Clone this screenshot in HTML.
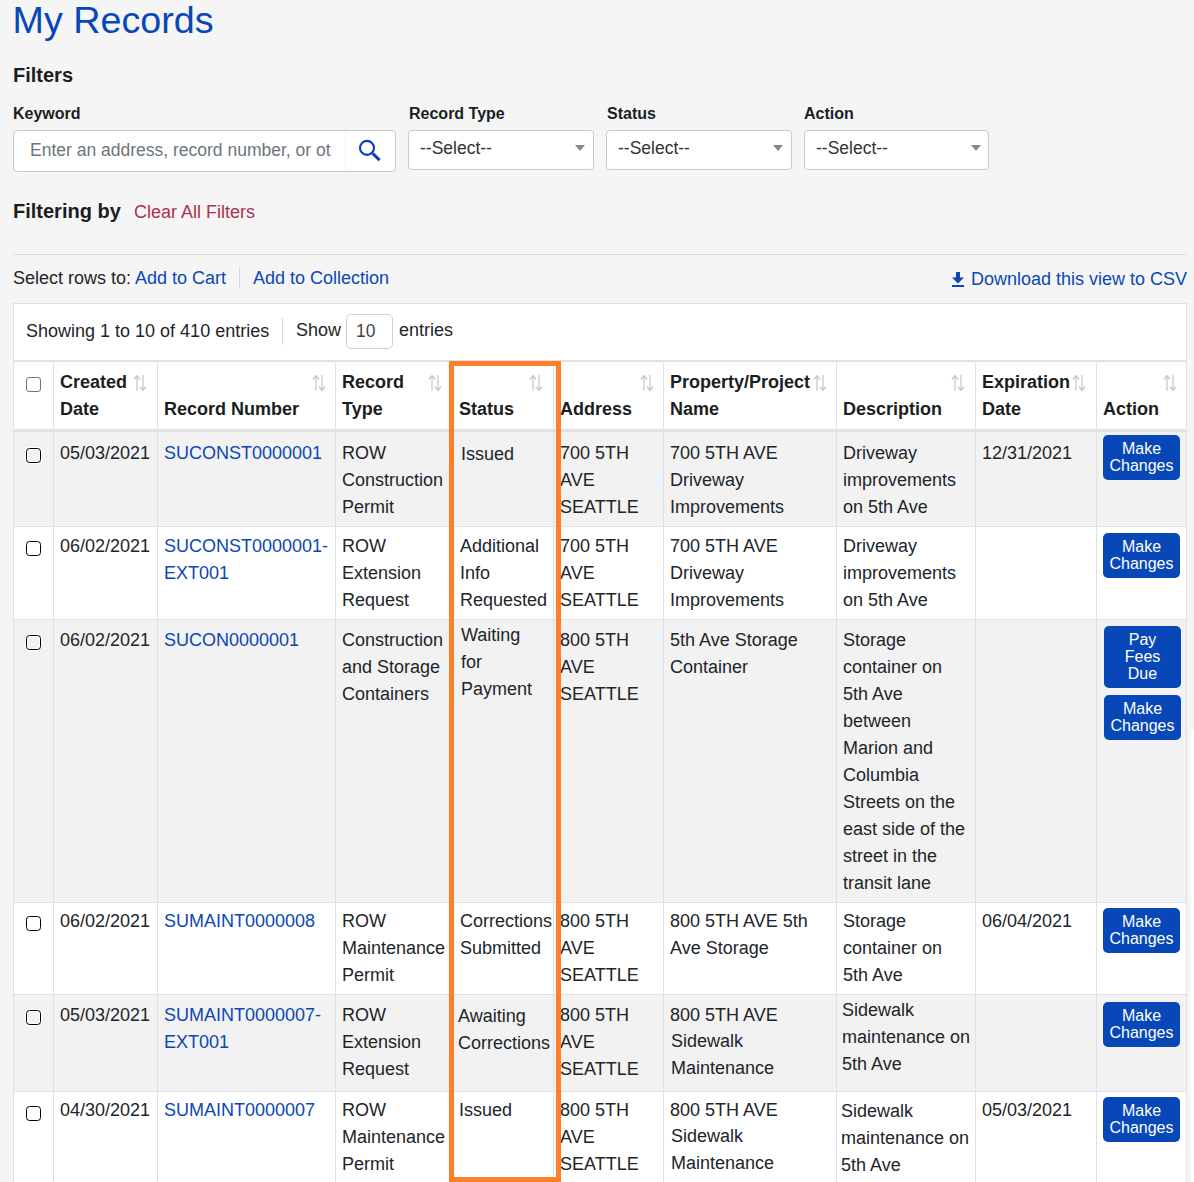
<!DOCTYPE html>
<html><head><meta charset="utf-8"><title>My Records</title>
<style>
html,body{margin:0;padding:0;}
body{width:1194px;height:1182px;overflow:hidden;background:#f5f5f5;position:relative;font-family:'Liberation Sans', sans-serif;}
.t{position:absolute;white-space:nowrap;}
.b{position:absolute;}
</style></head><body>
<div class="t" style="left:12.5px;top:0px;font-size:37.7px;line-height:40px;color:#0747b8;">My Records</div>
<div class="t" style="left:13px;top:65px;font-size:20px;line-height:20px;font-weight:bold;color:#1b1e21;">Filters</div>
<div class="t" style="left:13px;top:105px;font-size:16px;line-height:17px;font-weight:bold;color:#1b1e21;">Keyword</div>
<div class="t" style="left:409px;top:105px;font-size:16px;line-height:17px;font-weight:bold;color:#1b1e21;">Record Type</div>
<div class="t" style="left:607px;top:105px;font-size:16px;line-height:17px;font-weight:bold;color:#1b1e21;">Status</div>
<div class="t" style="left:804px;top:105px;font-size:16px;line-height:17px;font-weight:bold;color:#1b1e21;">Action</div>
<div class="b" style="left:13px;top:130px;width:383px;height:42px;box-sizing:border-box;border:1px solid #c9c9c9;border-radius:4px;background:#fff;"></div>
<div class="b" style="left:345px;top:131px;width:1px;height:40px;background:#f4f4f4;"></div>
<div class="t" style="left:30px;top:140px;font-size:17.5px;line-height:20px;color:#6c757d;">Enter an address, record number, or ot</div>
<svg class="b" style="left:356px;top:138px" width="26" height="26" viewBox="0 0 26 26"><circle cx="11" cy="9.9" r="7" fill="none" stroke="#0b3fb8" stroke-width="2.1"/><line x1="16.6" y1="15.4" x2="23.6" y2="22.1" stroke="#0b3fb8" stroke-width="2.9"/></svg>
<div class="b" style="left:408px;top:130px;width:186px;height:40px;box-sizing:border-box;border:1px solid #c9c9c9;border-radius:4px;background:#fff;"></div>
<div class="t" style="left:420px;top:138px;font-size:17.5px;line-height:20px;color:#333;">--Select--</div>
<svg class="b" style="left:575px;top:145px" width="10" height="6" viewBox="0 0 10 6"><path d="M0 0H10L5 6Z" fill="#878787"/></svg>
<div class="b" style="left:606px;top:130px;width:186px;height:40px;box-sizing:border-box;border:1px solid #c9c9c9;border-radius:4px;background:#fff;"></div>
<div class="t" style="left:618px;top:138px;font-size:17.5px;line-height:20px;color:#333;">--Select--</div>
<svg class="b" style="left:773px;top:145px" width="10" height="6" viewBox="0 0 10 6"><path d="M0 0H10L5 6Z" fill="#878787"/></svg>
<div class="b" style="left:804px;top:130px;width:185px;height:40px;box-sizing:border-box;border:1px solid #c9c9c9;border-radius:4px;background:#fff;"></div>
<div class="t" style="left:816px;top:138px;font-size:17.5px;line-height:20px;color:#333;">--Select--</div>
<svg class="b" style="left:971px;top:145px" width="10" height="6" viewBox="0 0 10 6"><path d="M0 0H10L5 6Z" fill="#878787"/></svg>
<div class="t" style="left:13px;top:201px;font-size:20px;line-height:20px;font-weight:bold;color:#1b1e21;">Filtering by</div>
<div class="t" style="left:134px;top:202px;font-size:18px;line-height:20px;color:#a8334f;">Clear All Filters</div>
<div class="b" style="left:13px;top:254px;width:1173px;height:1px;background:#dadee3;"></div>
<div class="t" style="left:13px;top:268px;font-size:18px;line-height:20px;color:#212529;">Select rows to:</div>
<div class="t" style="left:135px;top:268px;font-size:18px;line-height:20px;color:#0b47b5;">Add to Cart</div>
<div class="b" style="left:239px;top:268px;width:1px;height:20px;background:#d5d5d5;"></div>
<div class="t" style="left:253px;top:268px;font-size:18px;line-height:20px;color:#0b47b5;">Add to Collection</div>
<svg class="b" style="left:951px;top:271px" width="14" height="17" viewBox="0 0 14 17"><rect x="5" y="1" width="4" height="7" fill="#0b47b5"/><path d="M1 6.5H13L7 12.5Z" fill="#0b47b5"/><rect x="1" y="14" width="12" height="2" fill="#0b47b5"/></svg>
<div class="t" style="left:971px;top:269px;font-size:18px;line-height:20px;color:#0b47b5;">Download this view to CSV</div>
<div class="b" style="left:13px;top:303px;width:1174px;height:879px;box-sizing:border-box;border:1px solid #dee2e6;border-bottom:none;background:#fff;"></div>
<div class="t" style="left:26px;top:321px;font-size:18px;line-height:20px;color:#212529;">Showing 1 to 10 of 410 entries</div>
<div class="b" style="left:282px;top:318px;width:1px;height:27px;background:#d8d8d8;"></div>
<div class="t" style="left:296px;top:320px;font-size:18px;line-height:20px;color:#212529;">Show</div>
<div class="b" style="left:346px;top:314px;width:47px;height:35px;box-sizing:border-box;border:1px solid #cfcfcf;border-radius:5px;background:#fff;"></div>
<div class="t" style="left:356px;top:321px;font-size:17.5px;line-height:20px;color:#444;">10</div>
<div class="t" style="left:399px;top:320px;font-size:18px;line-height:20px;color:#212529;">entries</div>
<div class="b" style="left:14px;top:360px;width:1172px;height:2px;background:#dee2e6;"></div>
<div class="b" style="left:14px;top:432px;width:1172px;height:94px;background:#f2f2f2;"></div>
<div class="b" style="left:14px;top:527px;width:1172px;height:92px;background:#fff;"></div>
<div class="b" style="left:14px;top:620px;width:1172px;height:282px;background:#f2f2f2;"></div>
<div class="b" style="left:14px;top:903px;width:1172px;height:91px;background:#fff;"></div>
<div class="b" style="left:14px;top:995px;width:1172px;height:96px;background:#f2f2f2;"></div>
<div class="b" style="left:14px;top:1092px;width:1172px;height:90px;background:#fff;"></div>
<div class="b" style="left:14px;top:429px;width:1172px;height:3px;background:#dee2e6;"></div>
<div class="b" style="left:14px;top:526px;width:1172px;height:1px;background:#dee2e6;"></div>
<div class="b" style="left:14px;top:619px;width:1172px;height:1px;background:#dee2e6;"></div>
<div class="b" style="left:14px;top:902px;width:1172px;height:1px;background:#dee2e6;"></div>
<div class="b" style="left:14px;top:994px;width:1172px;height:1px;background:#dee2e6;"></div>
<div class="b" style="left:14px;top:1091px;width:1172px;height:1px;background:#dee2e6;"></div>
<div class="b" style="left:53px;top:362px;width:1px;height:820px;background:#dee2e6;"></div>
<div class="b" style="left:157px;top:362px;width:1px;height:820px;background:#dee2e6;"></div>
<div class="b" style="left:335px;top:362px;width:1px;height:820px;background:#dee2e6;"></div>
<div class="b" style="left:451px;top:362px;width:1px;height:820px;background:#dee2e6;"></div>
<div class="b" style="left:553px;top:362px;width:1px;height:820px;background:#dee2e6;"></div>
<div class="b" style="left:663px;top:362px;width:1px;height:820px;background:#dee2e6;"></div>
<div class="b" style="left:836px;top:362px;width:1px;height:820px;background:#dee2e6;"></div>
<div class="b" style="left:975px;top:362px;width:1px;height:820px;background:#dee2e6;"></div>
<div class="b" style="left:1096px;top:362px;width:1px;height:820px;background:#dee2e6;"></div>
<div class="t" style="left:60px;top:369px;font-size:18px;line-height:27px;font-weight:bold;color:#1b1e21;">Created</div>
<div class="t" style="left:60px;top:396px;font-size:18px;line-height:27px;font-weight:bold;color:#1b1e21;">Date</div>
<div class="t" style="left:164px;top:396px;font-size:18px;line-height:27px;font-weight:bold;color:#1b1e21;">Record Number</div>
<div class="t" style="left:342px;top:369px;font-size:18px;line-height:27px;font-weight:bold;color:#1b1e21;">Record</div>
<div class="t" style="left:342px;top:396px;font-size:18px;line-height:27px;font-weight:bold;color:#1b1e21;">Type</div>
<div class="t" style="left:459px;top:396px;font-size:18px;line-height:27px;font-weight:bold;color:#1b1e21;">Status</div>
<div class="t" style="left:560px;top:396px;font-size:18px;line-height:27px;font-weight:bold;color:#1b1e21;">Address</div>
<div class="t" style="left:670px;top:369px;font-size:18px;line-height:27px;font-weight:bold;color:#1b1e21;">Property/Project</div>
<div class="t" style="left:670px;top:396px;font-size:18px;line-height:27px;font-weight:bold;color:#1b1e21;">Name</div>
<div class="t" style="left:843px;top:396px;font-size:18px;line-height:27px;font-weight:bold;color:#1b1e21;">Description</div>
<div class="t" style="left:982px;top:369px;font-size:18px;line-height:27px;font-weight:bold;color:#1b1e21;">Expiration</div>
<div class="t" style="left:982px;top:396px;font-size:18px;line-height:27px;font-weight:bold;color:#1b1e21;">Date</div>
<div class="t" style="left:1103px;top:396px;font-size:18px;line-height:27px;font-weight:bold;color:#1b1e21;">Action</div>
<svg class="b" style="left:133px;top:374px" width="14" height="18" viewBox="0 0 14 18"><path d="M4 2.5V16.8" stroke="#dcdcdc" stroke-width="2"/><path d="M1 5.3L4 1.6L7 5.3" fill="none" stroke="#c2c2c2" stroke-width="1.3" stroke-linejoin="round"/><path d="M10 0.9V15.3" stroke="#dcdcdc" stroke-width="2"/><path d="M7 12.6L10 16.3L13 12.6" fill="none" stroke="#c2c2c2" stroke-width="1.3" stroke-linejoin="round"/></svg>
<svg class="b" style="left:312px;top:374px" width="14" height="18" viewBox="0 0 14 18"><path d="M4 2.5V16.8" stroke="#dcdcdc" stroke-width="2"/><path d="M1 5.3L4 1.6L7 5.3" fill="none" stroke="#c2c2c2" stroke-width="1.3" stroke-linejoin="round"/><path d="M10 0.9V15.3" stroke="#dcdcdc" stroke-width="2"/><path d="M7 12.6L10 16.3L13 12.6" fill="none" stroke="#c2c2c2" stroke-width="1.3" stroke-linejoin="round"/></svg>
<svg class="b" style="left:428px;top:374px" width="14" height="18" viewBox="0 0 14 18"><path d="M4 2.5V16.8" stroke="#dcdcdc" stroke-width="2"/><path d="M1 5.3L4 1.6L7 5.3" fill="none" stroke="#c2c2c2" stroke-width="1.3" stroke-linejoin="round"/><path d="M10 0.9V15.3" stroke="#dcdcdc" stroke-width="2"/><path d="M7 12.6L10 16.3L13 12.6" fill="none" stroke="#c2c2c2" stroke-width="1.3" stroke-linejoin="round"/></svg>
<svg class="b" style="left:529px;top:374px" width="14" height="18" viewBox="0 0 14 18"><path d="M4 2.5V16.8" stroke="#dcdcdc" stroke-width="2"/><path d="M1 5.3L4 1.6L7 5.3" fill="none" stroke="#c2c2c2" stroke-width="1.3" stroke-linejoin="round"/><path d="M10 0.9V15.3" stroke="#dcdcdc" stroke-width="2"/><path d="M7 12.6L10 16.3L13 12.6" fill="none" stroke="#c2c2c2" stroke-width="1.3" stroke-linejoin="round"/></svg>
<svg class="b" style="left:640px;top:374px" width="14" height="18" viewBox="0 0 14 18"><path d="M4 2.5V16.8" stroke="#dcdcdc" stroke-width="2"/><path d="M1 5.3L4 1.6L7 5.3" fill="none" stroke="#c2c2c2" stroke-width="1.3" stroke-linejoin="round"/><path d="M10 0.9V15.3" stroke="#dcdcdc" stroke-width="2"/><path d="M7 12.6L10 16.3L13 12.6" fill="none" stroke="#c2c2c2" stroke-width="1.3" stroke-linejoin="round"/></svg>
<svg class="b" style="left:813px;top:374px" width="14" height="18" viewBox="0 0 14 18"><path d="M4 2.5V16.8" stroke="#dcdcdc" stroke-width="2"/><path d="M1 5.3L4 1.6L7 5.3" fill="none" stroke="#c2c2c2" stroke-width="1.3" stroke-linejoin="round"/><path d="M10 0.9V15.3" stroke="#dcdcdc" stroke-width="2"/><path d="M7 12.6L10 16.3L13 12.6" fill="none" stroke="#c2c2c2" stroke-width="1.3" stroke-linejoin="round"/></svg>
<svg class="b" style="left:951px;top:374px" width="14" height="18" viewBox="0 0 14 18"><path d="M4 2.5V16.8" stroke="#dcdcdc" stroke-width="2"/><path d="M1 5.3L4 1.6L7 5.3" fill="none" stroke="#c2c2c2" stroke-width="1.3" stroke-linejoin="round"/><path d="M10 0.9V15.3" stroke="#dcdcdc" stroke-width="2"/><path d="M7 12.6L10 16.3L13 12.6" fill="none" stroke="#c2c2c2" stroke-width="1.3" stroke-linejoin="round"/></svg>
<svg class="b" style="left:1072px;top:374px" width="14" height="18" viewBox="0 0 14 18"><path d="M4 2.5V16.8" stroke="#dcdcdc" stroke-width="2"/><path d="M1 5.3L4 1.6L7 5.3" fill="none" stroke="#c2c2c2" stroke-width="1.3" stroke-linejoin="round"/><path d="M10 0.9V15.3" stroke="#dcdcdc" stroke-width="2"/><path d="M7 12.6L10 16.3L13 12.6" fill="none" stroke="#c2c2c2" stroke-width="1.3" stroke-linejoin="round"/></svg>
<svg class="b" style="left:1163px;top:374px" width="14" height="18" viewBox="0 0 14 18"><path d="M4 2.5V16.8" stroke="#dcdcdc" stroke-width="2"/><path d="M1 5.3L4 1.6L7 5.3" fill="none" stroke="#c2c2c2" stroke-width="1.3" stroke-linejoin="round"/><path d="M10 0.9V15.3" stroke="#dcdcdc" stroke-width="2"/><path d="M7 12.6L10 16.3L13 12.6" fill="none" stroke="#c2c2c2" stroke-width="1.3" stroke-linejoin="round"/></svg>
<div class="b" style="left:26px;top:377px;width:15px;height:15px;box-sizing:border-box;border:1px solid #767676;border-radius:3px;background:#fff;"></div>
<div class="b" style="left:26px;top:448px;width:15px;height:15px;box-sizing:border-box;border:1px solid #000;border-radius:3.5px;box-shadow:inset 0 0 0 1px #fff, 0 0 0 1px #fff;"></div>
<div class="b" style="left:26px;top:541px;width:15px;height:15px;box-sizing:border-box;border:1px solid #000;border-radius:3.5px;box-shadow:inset 0 0 0 1px #fff, 0 0 0 1px #fff;"></div>
<div class="b" style="left:26px;top:635px;width:15px;height:15px;box-sizing:border-box;border:1px solid #000;border-radius:3.5px;box-shadow:inset 0 0 0 1px #fff, 0 0 0 1px #fff;"></div>
<div class="b" style="left:26px;top:916px;width:15px;height:15px;box-sizing:border-box;border:1px solid #000;border-radius:3.5px;box-shadow:inset 0 0 0 1px #fff, 0 0 0 1px #fff;"></div>
<div class="b" style="left:26px;top:1010px;width:15px;height:15px;box-sizing:border-box;border:1px solid #000;border-radius:3.5px;box-shadow:inset 0 0 0 1px #fff, 0 0 0 1px #fff;"></div>
<div class="b" style="left:26px;top:1106px;width:15px;height:15px;box-sizing:border-box;border:1px solid #000;border-radius:3.5px;box-shadow:inset 0 0 0 1px #fff, 0 0 0 1px #fff;"></div>
<div class="t" style="left:60px;top:440px;font-size:18px;line-height:27px;color:#212529;">05/03/2021</div>
<div class="t" style="left:164px;top:440px;font-size:18px;line-height:27px;color:#0b47b5;">SUCONST0000001</div>
<div class="t" style="left:342px;top:440px;font-size:18px;line-height:27px;color:#212529;">ROW</div>
<div class="t" style="left:342px;top:467px;font-size:18px;line-height:27px;color:#212529;">Construction</div>
<div class="t" style="left:342px;top:494px;font-size:18px;line-height:27px;color:#212529;">Permit</div>
<div class="t" style="left:461px;top:441px;font-size:18px;line-height:27px;color:#212529;">Issued</div>
<div class="t" style="left:560px;top:440px;font-size:18px;line-height:27px;color:#212529;">700 5TH</div>
<div class="t" style="left:560px;top:467px;font-size:18px;line-height:27px;color:#212529;">AVE</div>
<div class="t" style="left:560px;top:494px;font-size:18px;line-height:27px;color:#212529;">SEATTLE</div>
<div class="t" style="left:670px;top:440px;font-size:18px;line-height:27px;color:#212529;">700 5TH AVE</div>
<div class="t" style="left:670px;top:467px;font-size:18px;line-height:27px;color:#212529;">Driveway</div>
<div class="t" style="left:670px;top:494px;font-size:18px;line-height:27px;color:#212529;">Improvements</div>
<div class="t" style="left:843px;top:440px;font-size:18px;line-height:27px;color:#212529;">Driveway</div>
<div class="t" style="left:843px;top:467px;font-size:18px;line-height:27px;color:#212529;">improvements</div>
<div class="t" style="left:843px;top:494px;font-size:18px;line-height:27px;color:#212529;">on 5th Ave</div>
<div class="t" style="left:982px;top:440px;font-size:18px;line-height:27px;color:#212529;">12/31/2021</div>
<div class="t" style="left:60px;top:533px;font-size:18px;line-height:27px;color:#212529;">06/02/2021</div>
<div class="t" style="left:164px;top:533px;font-size:18px;line-height:27px;color:#0b47b5;">SUCONST0000001-</div>
<div class="t" style="left:164px;top:560px;font-size:18px;line-height:27px;color:#0b47b5;">EXT001</div>
<div class="t" style="left:342px;top:533px;font-size:18px;line-height:27px;color:#212529;">ROW</div>
<div class="t" style="left:342px;top:560px;font-size:18px;line-height:27px;color:#212529;">Extension</div>
<div class="t" style="left:342px;top:587px;font-size:18px;line-height:27px;color:#212529;">Request</div>
<div class="t" style="left:460px;top:533px;font-size:18px;line-height:27px;color:#212529;">Additional</div>
<div class="t" style="left:460px;top:560px;font-size:18px;line-height:27px;color:#212529;">Info</div>
<div class="t" style="left:460px;top:587px;font-size:18px;line-height:27px;color:#212529;">Requested</div>
<div class="t" style="left:560px;top:533px;font-size:18px;line-height:27px;color:#212529;">700 5TH</div>
<div class="t" style="left:560px;top:560px;font-size:18px;line-height:27px;color:#212529;">AVE</div>
<div class="t" style="left:560px;top:587px;font-size:18px;line-height:27px;color:#212529;">SEATTLE</div>
<div class="t" style="left:670px;top:533px;font-size:18px;line-height:27px;color:#212529;">700 5TH AVE</div>
<div class="t" style="left:670px;top:560px;font-size:18px;line-height:27px;color:#212529;">Driveway</div>
<div class="t" style="left:670px;top:587px;font-size:18px;line-height:27px;color:#212529;">Improvements</div>
<div class="t" style="left:843px;top:533px;font-size:18px;line-height:27px;color:#212529;">Driveway</div>
<div class="t" style="left:843px;top:560px;font-size:18px;line-height:27px;color:#212529;">improvements</div>
<div class="t" style="left:843px;top:587px;font-size:18px;line-height:27px;color:#212529;">on 5th Ave</div>
<div class="t" style="left:60px;top:627px;font-size:18px;line-height:27px;color:#212529;">06/02/2021</div>
<div class="t" style="left:164px;top:627px;font-size:18px;line-height:27px;color:#0b47b5;">SUCON0000001</div>
<div class="t" style="left:342px;top:627px;font-size:18px;line-height:27px;color:#212529;">Construction</div>
<div class="t" style="left:342px;top:654px;font-size:18px;line-height:27px;color:#212529;">and Storage</div>
<div class="t" style="left:342px;top:681px;font-size:18px;line-height:27px;color:#212529;">Containers</div>
<div class="t" style="left:461px;top:622px;font-size:18px;line-height:27px;color:#212529;">Waiting</div>
<div class="t" style="left:461px;top:649px;font-size:18px;line-height:27px;color:#212529;">for</div>
<div class="t" style="left:461px;top:676px;font-size:18px;line-height:27px;color:#212529;">Payment</div>
<div class="t" style="left:560px;top:627px;font-size:18px;line-height:27px;color:#212529;">800 5TH</div>
<div class="t" style="left:560px;top:654px;font-size:18px;line-height:27px;color:#212529;">AVE</div>
<div class="t" style="left:560px;top:681px;font-size:18px;line-height:27px;color:#212529;">SEATTLE</div>
<div class="t" style="left:670px;top:627px;font-size:18px;line-height:27px;color:#212529;">5th Ave Storage</div>
<div class="t" style="left:670px;top:654px;font-size:18px;line-height:27px;color:#212529;">Container</div>
<div class="t" style="left:843px;top:627px;font-size:18px;line-height:27px;color:#212529;">Storage</div>
<div class="t" style="left:843px;top:654px;font-size:18px;line-height:27px;color:#212529;">container on</div>
<div class="t" style="left:843px;top:681px;font-size:18px;line-height:27px;color:#212529;">5th Ave</div>
<div class="t" style="left:843px;top:708px;font-size:18px;line-height:27px;color:#212529;">between</div>
<div class="t" style="left:843px;top:735px;font-size:18px;line-height:27px;color:#212529;">Marion and</div>
<div class="t" style="left:843px;top:762px;font-size:18px;line-height:27px;color:#212529;">Columbia</div>
<div class="t" style="left:843px;top:789px;font-size:18px;line-height:27px;color:#212529;">Streets on the</div>
<div class="t" style="left:843px;top:816px;font-size:18px;line-height:27px;color:#212529;">east side of the</div>
<div class="t" style="left:843px;top:843px;font-size:18px;line-height:27px;color:#212529;">street in the</div>
<div class="t" style="left:843px;top:870px;font-size:18px;line-height:27px;color:#212529;">transit lane</div>
<div class="t" style="left:60px;top:908px;font-size:18px;line-height:27px;color:#212529;">06/02/2021</div>
<div class="t" style="left:164px;top:908px;font-size:18px;line-height:27px;color:#0b47b5;">SUMAINT0000008</div>
<div class="t" style="left:342px;top:908px;font-size:18px;line-height:27px;color:#212529;">ROW</div>
<div class="t" style="left:342px;top:935px;font-size:18px;line-height:27px;color:#212529;">Maintenance</div>
<div class="t" style="left:342px;top:962px;font-size:18px;line-height:27px;color:#212529;">Permit</div>
<div class="t" style="left:460px;top:908px;font-size:18px;line-height:27px;color:#212529;">Corrections</div>
<div class="t" style="left:460px;top:935px;font-size:18px;line-height:27px;color:#212529;">Submitted</div>
<div class="t" style="left:560px;top:908px;font-size:18px;line-height:27px;color:#212529;">800 5TH</div>
<div class="t" style="left:560px;top:935px;font-size:18px;line-height:27px;color:#212529;">AVE</div>
<div class="t" style="left:560px;top:962px;font-size:18px;line-height:27px;color:#212529;">SEATTLE</div>
<div class="t" style="left:670px;top:908px;font-size:18px;line-height:27px;color:#212529;">800 5TH AVE 5th</div>
<div class="t" style="left:670px;top:935px;font-size:18px;line-height:27px;color:#212529;">Ave Storage</div>
<div class="t" style="left:843px;top:908px;font-size:18px;line-height:27px;color:#212529;">Storage</div>
<div class="t" style="left:843px;top:935px;font-size:18px;line-height:27px;color:#212529;">container on</div>
<div class="t" style="left:843px;top:962px;font-size:18px;line-height:27px;color:#212529;">5th Ave</div>
<div class="t" style="left:982px;top:908px;font-size:18px;line-height:27px;color:#212529;">06/04/2021</div>
<div class="t" style="left:60px;top:1002px;font-size:18px;line-height:27px;color:#212529;">05/03/2021</div>
<div class="t" style="left:164px;top:1002px;font-size:18px;line-height:27px;color:#0b47b5;">SUMAINT0000007-</div>
<div class="t" style="left:164px;top:1029px;font-size:18px;line-height:27px;color:#0b47b5;">EXT001</div>
<div class="t" style="left:342px;top:1002px;font-size:18px;line-height:27px;color:#212529;">ROW</div>
<div class="t" style="left:342px;top:1029px;font-size:18px;line-height:27px;color:#212529;">Extension</div>
<div class="t" style="left:342px;top:1056px;font-size:18px;line-height:27px;color:#212529;">Request</div>
<div class="t" style="left:458px;top:1003px;font-size:18px;line-height:27px;color:#212529;">Awaiting</div>
<div class="t" style="left:458px;top:1030px;font-size:18px;line-height:27px;color:#212529;">Corrections</div>
<div class="t" style="left:560px;top:1002px;font-size:18px;line-height:27px;color:#212529;">800 5TH</div>
<div class="t" style="left:560px;top:1029px;font-size:18px;line-height:27px;color:#212529;">AVE</div>
<div class="t" style="left:560px;top:1056px;font-size:18px;line-height:27px;color:#212529;">SEATTLE</div>
<div class="t" style="left:670px;top:1002px;font-size:18px;line-height:27px;color:#212529;">800 5TH AVE</div>
<div class="t" style="left:671px;top:1028px;font-size:18px;line-height:27px;color:#212529;">Sidewalk</div>
<div class="t" style="left:671px;top:1055px;font-size:18px;line-height:27px;color:#212529;">Maintenance</div>
<div class="t" style="left:842px;top:997px;font-size:18px;line-height:27px;color:#212529;">Sidewalk</div>
<div class="t" style="left:842px;top:1024px;font-size:18px;line-height:27px;color:#212529;">maintenance on</div>
<div class="t" style="left:842px;top:1051px;font-size:18px;line-height:27px;color:#212529;">5th Ave</div>
<div class="t" style="left:60px;top:1097px;font-size:18px;line-height:27px;color:#212529;">04/30/2021</div>
<div class="t" style="left:164px;top:1097px;font-size:18px;line-height:27px;color:#0b47b5;">SUMAINT0000007</div>
<div class="t" style="left:342px;top:1097px;font-size:18px;line-height:27px;color:#212529;">ROW</div>
<div class="t" style="left:342px;top:1124px;font-size:18px;line-height:27px;color:#212529;">Maintenance</div>
<div class="t" style="left:342px;top:1151px;font-size:18px;line-height:27px;color:#212529;">Permit</div>
<div class="t" style="left:459px;top:1097px;font-size:18px;line-height:27px;color:#212529;">Issued</div>
<div class="t" style="left:560px;top:1097px;font-size:18px;line-height:27px;color:#212529;">800 5TH</div>
<div class="t" style="left:560px;top:1124px;font-size:18px;line-height:27px;color:#212529;">AVE</div>
<div class="t" style="left:560px;top:1151px;font-size:18px;line-height:27px;color:#212529;">SEATTLE</div>
<div class="t" style="left:670px;top:1097px;font-size:18px;line-height:27px;color:#212529;">800 5TH AVE</div>
<div class="t" style="left:671px;top:1123px;font-size:18px;line-height:27px;color:#212529;">Sidewalk</div>
<div class="t" style="left:671px;top:1150px;font-size:18px;line-height:27px;color:#212529;">Maintenance</div>
<div class="t" style="left:841px;top:1098px;font-size:18px;line-height:27px;color:#212529;">Sidewalk</div>
<div class="t" style="left:841px;top:1125px;font-size:18px;line-height:27px;color:#212529;">maintenance on</div>
<div class="t" style="left:841px;top:1152px;font-size:18px;line-height:27px;color:#212529;">5th Ave</div>
<div class="t" style="left:982px;top:1097px;font-size:18px;line-height:27px;color:#212529;">05/03/2021</div>
<div class="b" style="left:1103px;top:435px;width:77px;height:45px;background:#0747b8;border-radius:5px;"></div>
<div class="t" style="left:1103px;width:77px;text-align:center;top:440px;font-size:16px;line-height:17px;color:#fff">Make</div>
<div class="t" style="left:1103px;width:77px;text-align:center;top:457px;font-size:16px;line-height:17px;color:#fff">Changes</div>
<div class="b" style="left:1103px;top:533px;width:77px;height:45px;background:#0747b8;border-radius:5px;"></div>
<div class="t" style="left:1103px;width:77px;text-align:center;top:538px;font-size:16px;line-height:17px;color:#fff">Make</div>
<div class="t" style="left:1103px;width:77px;text-align:center;top:555px;font-size:16px;line-height:17px;color:#fff">Changes</div>
<div class="b" style="left:1104px;top:626px;width:77px;height:62px;background:#0747b8;border-radius:5px;"></div>
<div class="t" style="left:1104px;width:77px;text-align:center;top:631px;font-size:16px;line-height:17px;color:#fff">Pay</div>
<div class="t" style="left:1104px;width:77px;text-align:center;top:648px;font-size:16px;line-height:17px;color:#fff">Fees</div>
<div class="t" style="left:1104px;width:77px;text-align:center;top:665px;font-size:16px;line-height:17px;color:#fff">Due</div>
<div class="b" style="left:1104px;top:695px;width:77px;height:45px;background:#0747b8;border-radius:5px;"></div>
<div class="t" style="left:1104px;width:77px;text-align:center;top:700px;font-size:16px;line-height:17px;color:#fff">Make</div>
<div class="t" style="left:1104px;width:77px;text-align:center;top:717px;font-size:16px;line-height:17px;color:#fff">Changes</div>
<div class="b" style="left:1103px;top:908px;width:77px;height:45px;background:#0747b8;border-radius:5px;"></div>
<div class="t" style="left:1103px;width:77px;text-align:center;top:913px;font-size:16px;line-height:17px;color:#fff">Make</div>
<div class="t" style="left:1103px;width:77px;text-align:center;top:930px;font-size:16px;line-height:17px;color:#fff">Changes</div>
<div class="b" style="left:1103px;top:1002px;width:77px;height:45px;background:#0747b8;border-radius:5px;"></div>
<div class="t" style="left:1103px;width:77px;text-align:center;top:1007px;font-size:16px;line-height:17px;color:#fff">Make</div>
<div class="t" style="left:1103px;width:77px;text-align:center;top:1024px;font-size:16px;line-height:17px;color:#fff">Changes</div>
<div class="b" style="left:1103px;top:1097px;width:77px;height:45px;background:#0747b8;border-radius:5px;"></div>
<div class="t" style="left:1103px;width:77px;text-align:center;top:1102px;font-size:16px;line-height:17px;color:#fff">Make</div>
<div class="t" style="left:1103px;width:77px;text-align:center;top:1119px;font-size:16px;line-height:17px;color:#fff">Changes</div>
<div class="b" style="left:449px;top:361px;width:112px;height:821px;box-sizing:border-box;border:5px solid #fd7f28;"></div>
<div class="b" style="left:1191px;top:729px;width:3px;height:453px;background:#fff;"></div>
</body></html>
